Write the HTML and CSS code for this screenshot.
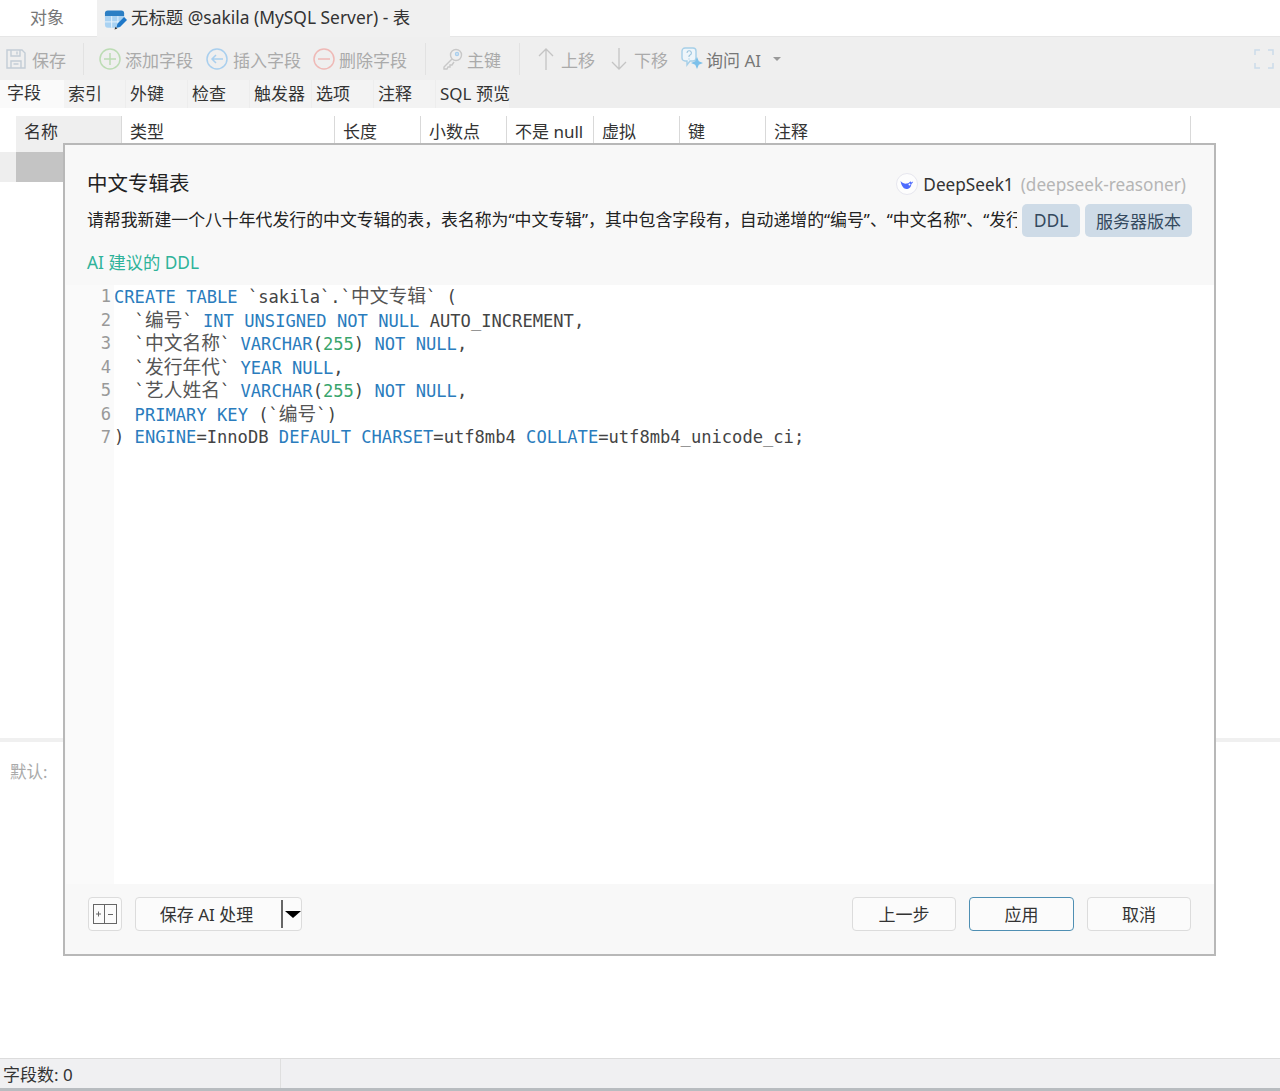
FILE: index.html
```html
<!DOCTYPE html>
<html lang="zh">

<head>
    <meta charset="UTF-8">
    <meta name="viewport" content="width=device-width, initial-scale=1.0">
    <title>无标题 @sakila (MySQL Server) - 表</title>
    <link rel="stylesheet" href="styles.css">
</head>

<body>
    <div class="app">
        <div class="tabs">
            <div class="tab">对象</div>
            <div class="tab active">
                <svg class="tab-icon" width="23" height="24" viewBox="0 0 24 24">
                    <path d="M1 6a3 3 0 0 1 3-3h14a3 3 0 0 1 3 3v3H1z" fill="#2c7fc4" />
                    <path d="M1 9h20v6l-5 6H4a3 3 0 0 1-3-3z" fill="#a9d2f2" />
                    <path d="M8 9v12M14.500 9v8M1 15h15" stroke="#e8f4fc" stroke-width="1" />
                    <path d="M13 21l1-4 7-7 3 3-7 7z" fill="#1f78c8" />
                    <path d="M11 23l3-1-2-2z" fill="#333" />
                </svg>
                <span class="tab-text">无标题 @sakila (MySQL Server) - 表</span>
            </div>
        </div>

        <div class="toolbar">
            <div class="tool tool-save">
                <svg width="22" height="24" viewBox="0 0 22 24" fill="none" stroke="#c3cdd6" stroke-width="1.400">
                    <path d="M2 3h15l3 3v15H2z" />
                    <path d="M6 3v6h9V3M12 4.500v3M6 21v-7h10v7M8.500 17h5" />
                </svg>
                <span>保存</span>
            </div>
            <div class="sep sep-a"></div>
            <div class="tool tool-add">
                <svg width="22" height="22" viewBox="0 0 22 22" fill="none" stroke="#bcdcb4" stroke-width="1.500">
                    <circle cx="11" cy="11" r="10" />
                    <path d="M11 5v12M5 11h12" />
                </svg>
                <span>添加字段</span>
            </div>
            <div class="tool tool-insert">
                <svg width="22" height="22" viewBox="0 0 22 22" fill="none" stroke="#a9cfee" stroke-width="1.500">
                    <circle cx="11" cy="11" r="10" />
                    <path d="M17 11H6M10 7l-4 4 4 4" />
                </svg>
                <span>插入字段</span>
            </div>
            <div class="tool tool-del">
                <svg width="22" height="22" viewBox="0 0 22 22" fill="none" stroke="#efb9b6" stroke-width="1.500">
                    <circle cx="11" cy="11" r="10" />
                    <path d="M5 11h12" />
                </svg>
                <span>删除字段</span>
            </div>
            <div class="sep sep-b"></div>
            <div class="tool tool-key">
                <svg width="20" height="22" viewBox="0 0 20 22" fill="none" stroke="#c8c8c8" stroke-width="1.400">
                    <circle cx="13" cy="7" r="5.500" />
                    <circle cx="14" cy="6" r="1.500" stroke="#a9cfee" />
                    <path d="M9 11l-8 8v2h3l1-2h2v-2h2l2-3" />
                </svg>
                <span>主键</span>
            </div>
            <div class="sep sep-c"></div>
            <div class="tool tool-up">
                <svg width="16" height="24" viewBox="0 0 16 24" fill="none" stroke="#c4c4c4" stroke-width="1.300">
                    <path d="M8 23V2M1 9l7-7 7 7" />
                </svg>
                <span>上移</span>
            </div>
            <div class="tool tool-down">
                <svg width="16" height="24" viewBox="0 0 16 24" fill="none" stroke="#c4c4c4" stroke-width="1.300">
                    <path d="M8 1v21M1 15l7 7 7-7" />
                </svg>
                <span>下移</span>
            </div>
            <div class="tool tool-ai">
                <svg width="23" height="24" viewBox="0 0 23 24" fill="none">
                    <path d="M4 1h8a3 3 0 0 1 3 3v7a3 3 0 0 1-3 3H9l-3 4v-4H4a3 3 0 0 1-3-3V4a3 3 0 0 1 3-3z" stroke="#a6cfe8" stroke-width="1.400" fill="#eef5fa" />
                    <path d="M6 6a2.200 2.200 0 1 1 3 2l-1 1v1M8 11.500v1" stroke="#9cc4dd" stroke-width="1.100" />
                    <path d="M16 10l1.800 4.200L22 16l-4.200 1.800L16 22l-1.800-4.200L10 16l4.200-1.800z" fill="#7cc0ea" />
                </svg>
                <span>询问 AI</span>
                <i class="ai-caret"></i>
            </div>
            <svg class="fullscreen" width="20" height="20" viewBox="0 0 20 20" fill="none" stroke="#cbdcea" stroke-width="1.500">
                <path d="M1 6V1h5M14 1h5v5M19 14v5h-5M6 19H1v-5" />
            </svg>
        </div>

        <div class="field-tabs">
            <div class="ftab first">字段</div>
            <div class="ftab">索引</div>
            <div class="ftab">外键</div>
            <div class="ftab">检查</div>
            <div class="ftab">触发器</div>
            <div class="ftab">选项</div>
            <div class="ftab">注释</div>
            <div class="ftab last">SQL 预览</div>
        </div>

        <div class="grid">
            <div class="grid-head">
                <div class="col col-name">名称</div>
                <div class="col col-type">类型</div>
                <div class="col">长度</div>
                <div class="col">小数点</div>
                <div class="col col-null">不是 null</div>
                <div class="col">虚拟</div>
                <div class="col">键</div>
                <div class="col col-note">注释</div>
            </div>
            <div class="grid-row">
                <div class="row-mark"></div>
                <div class="row-cell"></div>
            </div>
        </div>

        <div class="defaults">默认:</div>

        <div class="status">
            <div class="status-left">字段数: 0</div>
        </div>
    </div>

    <div class="dialog">
        <div class="dialog-head">
            <div class="dialog-title">中文专辑表</div>
            <div class="model">
                <svg width="22" height="22" viewBox="0 0 22 22">
                    <circle cx="11" cy="11" r="10.500" fill="#fdfdfd" stroke="#e6e6ee" />
                    <path d="M4.500 8c2 2.500 4.500 3 6.500 2.600 1.500-.3 2.500-1.400 3.500-2.400l.6 1.300 2-1c-.3 1.500-1 2-1.700 2.400-.2 3-2.400 5-5 5-2.500 0-4.700-2.200-5.900-7.900z" fill="#4d6bfe" />
                    <circle cx="13.500" cy="11.500" r="1" fill="#fff" />
                </svg>
                <span class="model-name">DeepSeek1</span>
                <span class="model-id">(deepseek-reasoner)</span>
            </div>
        </div>
        <div class="prompt-row">
            <div class="prompt">请帮我新建一个八十年代发行的中文专辑的表，表名称为“中文专辑”，其中包含字段有，自动递增的“编号”、“中文名称”、“发行</div>
            <button class="pill pill-ddl">DDL</button>
            <button class="pill pill-ver">服务器版本</button>
        </div>
        <div class="ddl-label">AI 建议的 DDL</div>

        <div class="code">
            <div class="gutter">
                <div>1</div>
                <div>2</div>
                <div>3</div>
                <div>4</div>
                <div>5</div>
                <div>6</div>
                <div>7</div>
            </div>
            <div class="lines">
                <div><b>CREATE</b> <b>TABLE</b> `sakila`.`<em>中文专辑</em>` (</div>
                <div>  `<em>编号</em>` <b>INT</b> <b>UNSIGNED</b> <b>NOT</b> <b>NULL</b> AUTO_INCREMENT,</div>
                <div>  `<em>中文名称</em>` <b>VARCHAR</b>(<u>255</u>) <b>NOT</b> <b>NULL</b>,</div>
                <div>  `<em>发行年代</em>` <b>YEAR</b> <b>NULL</b>,</div>
                <div>  `<em>艺人姓名</em>` <b>VARCHAR</b>(<u>255</u>) <b>NOT</b> <b>NULL</b>,</div>
                <div>  <b>PRIMARY</b> <b>KEY</b> (`<em>编号</em>`)</div>
                <div>) <b>ENGINE</b>=InnoDB <b>DEFAULT</b> <b>CHARSET</b>=utf8mb4 <b>COLLATE</b>=utf8mb4_unicode_ci;</div>
            </div>
        </div>

        <div class="dialog-foot">
            <button class="btn btn-icon">
                <svg width="24" height="20" viewBox="0 0 24 20" fill="none" stroke="#666" stroke-width="1">
                    <rect x="0.500" y="0.500" width="23" height="19" />
                    <path d="M11.500 0v20M3 10h5M5.500 7.500v5M15 10.500h5" />
                </svg>
            </button>
            <div class="btn btn-split">
                <span class="split-text">保存 AI 处理</span>
                <i class="split-line"></i>
                <i class="split-caret"></i>
            </div>
            <div class="foot-right">
                <button class="btn btn-step">上一步</button>
                <button class="btn btn-step primary">应用</button>
                <button class="btn btn-step">取消</button>
            </div>
        </div>
    </div>
</body>

</html>
```

FILE: styles.css
```css
* {
    margin: 0;
    padding: 0;
    box-sizing: border-box;
    font-family: "Noto Sans", "Noto Sans CJK SC", sans-serif;
}

body {
    width: 1280px;
    height: 1091px;
    overflow: hidden;
    background: #fff;
    color: #333;
    position: relative;
}

.app {
    height: 1091px;
    display: flex;
    flex-direction: column;
}

/* top tabs */
.tabs {
    height: 37px;
    display: flex;
    border-bottom: 1px solid #e6e6e6;
    flex: none;
}

.tab {
    width: 97px;
    padding-left: 30px;
    font-size: 17px;
    line-height: 36px;
    color: #777;
}

.tab.active {
    width: 353px;
    height: 37px;
    padding-left: 7px;
    display: flex;
    align-items: center;
    gap: 4px;
    background: #f0f0f0;
    color: #333;
    font-size: 17.400px;
    white-space: nowrap;
}

.tab-icon {
    flex: none;
}

.tab-text {
    padding-bottom: 3px;
}

/* toolbar */
.toolbar {
    height: 43px;
    flex: none;
    display: flex;
    align-items: center;
    background: #efefef;
    position: relative;
}

.tool {
    display: flex;
    align-items: center;
    font-size: 17px;
    color: #aaa;
    flex: none;
}

.tool span {
    padding-top: 2px;
}

.tool-save {
    margin-left: 5px;
    gap: 5px;
}

.sep {
    width: 1px;
    height: 32px;
    background: #e2e2e2;
    flex: none;
}

.sep-a {
    margin-left: 17px;
}

.tool-add {
    margin-left: 15px;
    gap: 4px;
}

.tool-insert {
    margin-left: 13px;
    gap: 5px;
}

.tool-del {
    margin-left: 12px;
    gap: 4px;
}

.sep-b {
    margin-left: 18px;
}

.tool-key {
    margin-left: 17px;
    gap: 4px;
}

.sep-c {
    margin-left: 18px;
}

.tool-up {
    margin-left: 18px;
    gap: 7px;
}

.tool-down {
    margin-left: 16px;
    gap: 7px;
}

.tool-ai {
    margin-left: 13px;
    gap: 2px;
    color: #777;
}

.ai-caret {
    margin-left: 10px;
    border: 4px solid transparent;
    border-top-color: #999;
    border-bottom: 0;
}

.fullscreen {
    margin-left: auto;
    margin-right: 6px;
}

/* field tabs */
.field-tabs {
    height: 28px;
    flex: none;
    display: flex;
    background: #eeeeee;
}

.ftab {
    width: 62px;
    padding-left: 4px;
    font-size: 17px;
    line-height: 27px;
    color: #333;
    background: #f3f3f3;
    border-right: 1px solid #ededed;
    flex: none;
    white-space: nowrap;
}

.ftab.first {
    width: 64px;
    padding-left: 7px;
    background: #fafafa;
    line-height: 25px;
    border-right: 0;
}

.ftab.last {
    width: 74px;
}

/* table behind the dialog */
.grid {
    flex: 1;
    padding-top: 8px;
}

.grid-head {
    height: 36px;
    margin-left: 16px;
    width: 1175px;
    display: flex;
}

.col {
    width: 86px;
    padding-left: 8px;
    font-size: 17px;
    line-height: 32px;
    color: #333;
    border-right: 1px solid #d9d9d9;
    white-space: nowrap;
}

.col-name {
    width: 106px;
    background: #efefef;
}

.col-type {
    width: 213px;
}

.col-null {
    width: 87px;
}

.col-note {
    width: 425px;
}

.grid-row {
    height: 30px;
    display: flex;
}

.row-mark {
    width: 16px;
    background: #eeeeee;
}

.row-cell {
    width: 106px;
    background: #c4c4c4;
}

.defaults {
    height: 320px;
    flex: none;
    padding: 17px 0 0 10px;
    border-top: 4px solid #f0f0f0;
    font-size: 16.500px;
    color: #aaa;
}

.status {
    height: 33px;
    flex: none;
    background: #f0f0f2;
    border-top: 1px solid #dcdcdc;
    border-bottom: 3px solid #b8bcc0;
}

.status-left {
    width: 281px;
    height: 29px;
    padding-left: 3px;
    font-size: 17px;
    line-height: 31px;
    border-right: 1px solid #dfdfdf;
}

/* dialog */
.dialog {
    position: absolute;
    left: 63px;
    top: 143px;
    width: 1153px;
    height: 813px;
    display: flex;
    flex-direction: column;
    background: #f8f8f8;
    border: 2px solid #b8b8b8;
}

.dialog-head {
    height: 51px;
    padding: 22px 28px 0 22px;
    display: flex;
    justify-content: space-between;
    align-items: center;
    flex: none;
}

.dialog-title {
    font-size: 20.500px;
    color: #222;
}

.model {
    margin-top: 5px;
    display: flex;
    align-items: center;
    font-size: 17.200px;
    white-space: pre;
}

.model svg {
    margin-right: 5px;
}

.model-name {
    color: #333;
}

.model-id {
    margin-left: 7px;
    color: #b5b5b5;
}

.prompt-row {
    height: 33px;
    margin-top: 8px;
    padding: 0 22px;
    display: flex;
    align-items: center;
    flex: none;
}

.prompt {
    width: 930px;
    padding-bottom: 4px;
    overflow: hidden;
    white-space: nowrap;
    font-size: 16.880px;
    color: #222;
    flex: none;
}

.pill {
    height: 33px;
    padding-bottom: 1px;
    border: 0;
    border-radius: 5px;
    background: #cedbe7;
    color: #34495e;
    font-size: 17.500px;
}

.pill-ddl {
    width: 58px;
    margin-left: 5px;
}

.pill-ver {
    width: 107px;
    margin-left: 5px;
    font-size: 17px;
}

.ddl-label {
    height: 48px;
    padding: 13px 0 0 22px;
    font-size: 17.300px;
    line-height: 26px;
    color: #2fb39a;
    flex: none;
}

.code {
    flex: 1;
    display: flex;
    padding-left: 1px;
    font-size: 17.120px;
    line-height: 23.500px;
}

.gutter {
    width: 48px;
    padding-right: 3px;
    text-align: right;
    color: #999;
    background: #fafafa;
    flex: none;
}

.gutter div,
.lines div {
    font-family: "DejaVu Sans Mono", monospace;
    height: 23.500px;
    white-space: pre;
}

.lines {
    flex: 1;
    background: #fff;
    color: #444;
}

.lines b,
.lines em,
.lines u {
    font-family: "DejaVu Sans Mono", "Noto Sans CJK SC", monospace;
    font-weight: normal;
    font-style: normal;
    text-decoration: none;
}

.lines b {
    color: #2a7cbd;
}

.lines u {
    color: #39a56c;
}

.lines em {
    font-family: "Noto Sans CJK SC", sans-serif;
    font-size: 18.750px;
    line-height: 20px;
    color: #555;
}

.dialog-foot {
    height: 70px;
    padding: 13px 23px 0 23px;
    display: flex;
    flex: none;
}

.btn {
    height: 34px;
    padding-bottom: 2px;
    background: #fbfbfb;
    border: 1px solid #dcdcdc;
    border-radius: 4px;
    font-size: 17px;
    color: #333;
}

.btn-icon {
    width: 34px;
    padding-bottom: 0;
    display: flex;
    align-items: center;
    justify-content: center;
}

.btn-split {
    width: 167px;
    margin-left: 13px;
    padding-bottom: 0;
    display: flex;
    align-items: center;
}

.split-text {
    width: 141px;
    padding-bottom: 2px;
    text-align: center;
}

.split-line {
    width: 2px;
    height: 28px;
    margin-left: 4px;
    background: #666;
}

.split-caret {
    margin-left: 2px;
    border: 8px solid transparent;
    border-top: 7px solid #000;
    border-bottom: 0;
}

.foot-right {
    margin-left: auto;
    display: flex;
    gap: 13px;
}

.btn-step {
    width: 104px;
}

.btn-step.primary {
    width: 105px;
    border-color: #4f8fb3;
}
```
